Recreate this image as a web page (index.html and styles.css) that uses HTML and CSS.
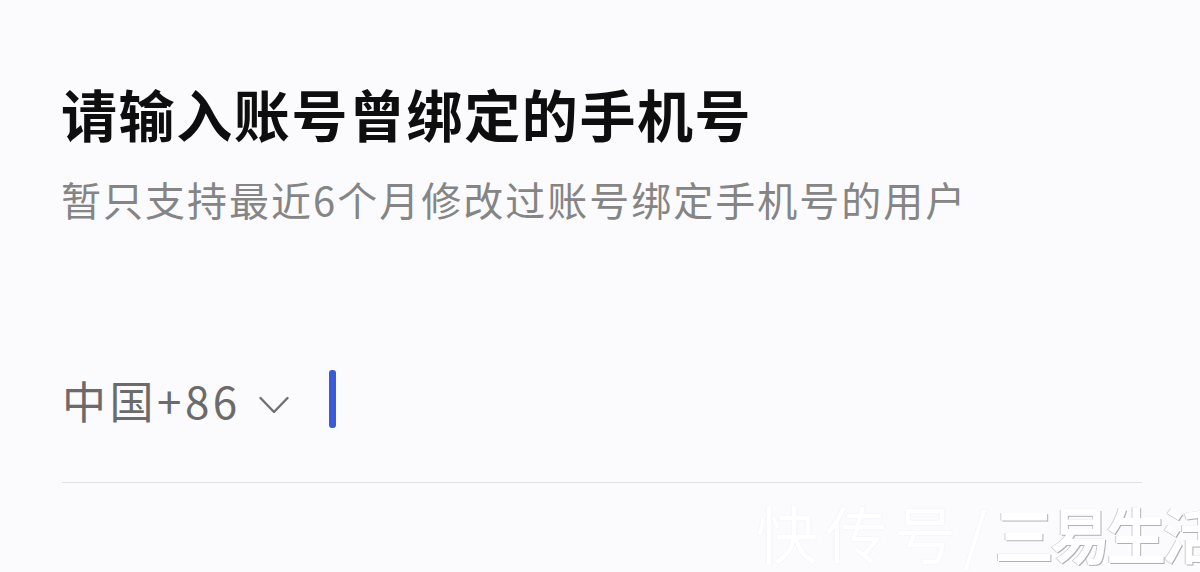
FILE: index.html
```html
<!DOCTYPE html>
<html lang="zh-CN">
<head>
<meta charset="utf-8">
<title>绑定手机号</title>
<link rel="stylesheet" href="styles.css">
</head>
<body>
<main class="page">
  <h1 class="title">请输入账号曾绑定的手机号</h1>
  <p class="subtitle">暂只支持最近6个月修改过账号绑定手机号的用户</p>
  <div class="phone-field">
    <div class="country">
      <span class="country-code">中国+86</span>
      <svg class="chevron" width="30" height="19" viewBox="0 0 30 19" aria-hidden="true">
        <path d="M1.5 2 L15 16 L28.5 2" fill="none" stroke="#707070" stroke-width="2.4" stroke-linecap="round" stroke-linejoin="round"/>
      </svg>
    </div>
    <span class="cursor"></span>
  </div>
</main>
<div class="watermark">快传号/<span class="wm-strong">三易生活</span></div>
</body>
</html>
```

FILE: styles.css
```css
html, body {
  margin: 0;
  padding: 0;
  background: #fbfbfd;
  height: 100%;
  overflow: hidden;
}

body {
  font-family: "Noto Sans CJK SC", "Noto Sans", sans-serif;
  position: relative;
}

.page {
  padding: 83px 58px 0 61px;
}

.title {
  margin: 0;
  font-size: 56px;
  line-height: 60px;
  font-weight: 700;
  letter-spacing: 1.6px;
  color: #0e0e0e;
}

.subtitle {
  margin: 32px 0 0;
  font-size: 40px;
  line-height: 48px;
  letter-spacing: 2px;
  color: #858585;
  font-weight: 400;
}

.phone-field {
  margin-top: 145px;
  height: 64px;
  padding-bottom: 50px;
  border-bottom: 1px solid #e1e1e4;
  display: flex;
  align-items: center;
  margin-left: 1px;
}

.country {
  display: flex;
  align-items: center;
}

.country-code {
  font-size: 44px;
  line-height: 64px;
  letter-spacing: 3.5px;
  color: #6b6b6b;
}

.chevron {
  margin-left: 18px;
  margin-top: 10px;
}

.cursor {
  width: 7px;
  height: 58px;
  border-radius: 3px;
  background: #3a5ad8;
  margin-left: 40px;
  margin-top: -2px;
}

.watermark {
  position: absolute;
  left: 756px;
  top: 496px;
  font-size: 62px;
  line-height: 72px;
  color: #ffffff;
  white-space: nowrap;
  letter-spacing: 7px;
  text-shadow: 0 0 1px rgba(215, 215, 220, 0.7);
}

.wm-strong {
  font-size: 60px;
  font-weight: 700;
  letter-spacing: -4px;
  text-shadow: 1px 1px 0 #b0b0b4, -1px 0 0 #cdcdd0;
}
```
